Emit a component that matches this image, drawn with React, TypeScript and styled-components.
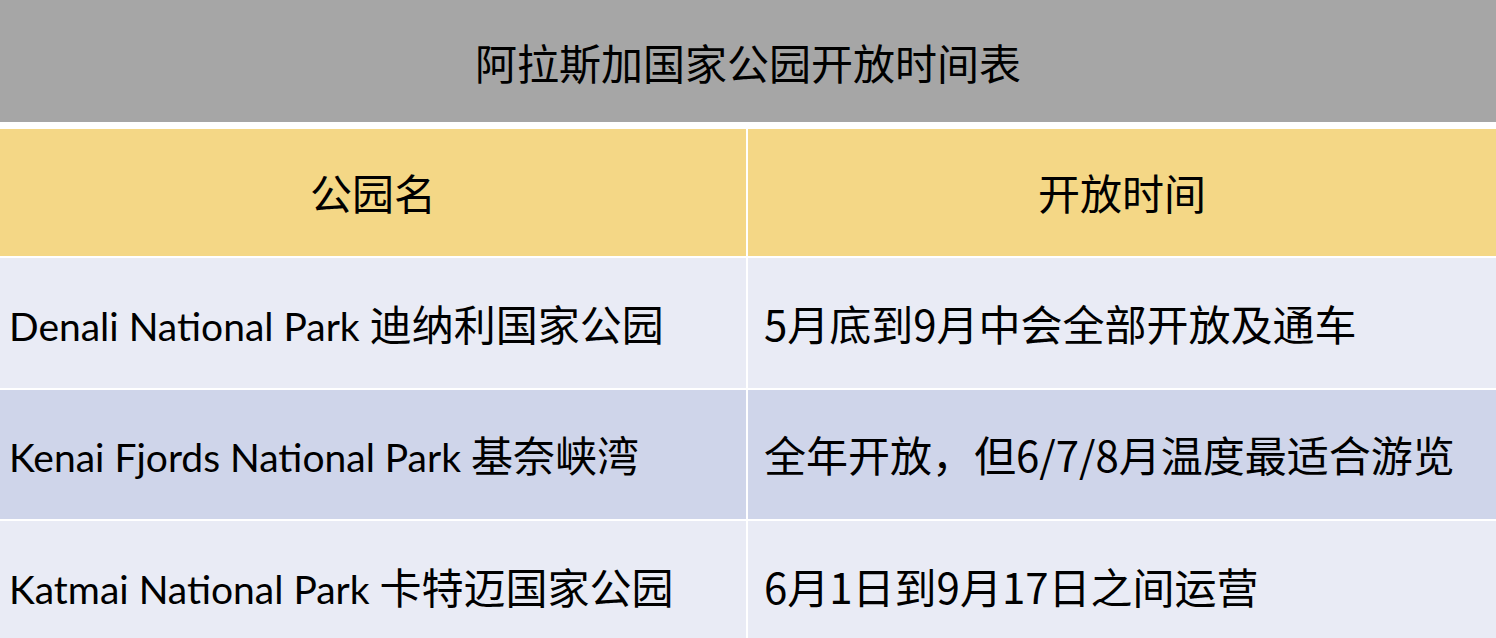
import React from "react";
import styled, { createGlobalStyle } from "styled-components";

const Global = createGlobalStyle`
  html, body { margin: 0; padding: 0; background: #ffffff; }
  body { font-family: Lato, "Noto Sans CJK SC", sans-serif; color: #000; }
`;

const Page = styled.div`
  display: flex;
  flex-direction: column;
  width: 1496px;
  height: 638px;
  overflow: hidden;
  background: #ffffff;
`;

const TitleBar = styled.div`
  height: 122px;
  flex: none;
  background: #a6a6a6;
  display: flex;
  align-items: center;
  justify-content: center;
  font-family: "Noto Sans CJK SC", sans-serif;
  font-size: 42px;
  margin-bottom: 7px;
`;

const Table = styled.div`
  display: grid;
  grid-template-columns: 746px 1fr;
  column-gap: 2px;
  row-gap: 2px;
`;

const Cell = styled.div<{ $bg: string; $h: number; $center?: boolean; $pad: number }>`
  background: ${(p) => p.$bg};
  height: ${(p) => p.$h}px;
  display: flex;
  align-items: center;
  justify-content: ${(p) => (p.$center ? "center" : "flex-start")};
  padding-left: ${(p) => p.$pad}px;
  padding-bottom: 2px;
  box-sizing: border-box;
  white-space: nowrap;
`;

const Line = styled.span`
  font-family: Lato, "Noto Sans CJK SC", sans-serif;
  font-size: 39px;
  white-space: pre;
`;

const Zh = styled.span<{ $size?: number }>`
  font-family: "Noto Sans CJK SC", sans-serif;
  font-size: ${(p) => p.$size ?? 42}px;
`;

const rows = [
  { en: "Denali National Park ", zh: "迪纳利国家公园", time: "5月底到9月中会全部开放及通车", bg: "#e9ebf5", h: 130 },
  { en: "Kenai Fjords National Park ", zh: "基奈峡湾", time: "全年开放，但6/7/8月温度最适合游览", bg: "#cfd5ea", h: 129 },
  { en: "Katmai National Park ", zh: "卡特迈国家公园", time: "6月1日到9月17日之间运营", bg: "#e9ebf5", h: 130 },
];

export default function App() {
  return (
    <Page>
      <Global />
      <TitleBar>阿拉斯加国家公园开放时间表</TitleBar>
      <Table>
        <Cell $bg="#f4d786" $h={127} $center $pad={0}>
          <Zh $size={42}>公园名</Zh>
        </Cell>
        <Cell $bg="#f4d786" $h={127} $center $pad={0}>
          <Zh $size={42}>开放时间</Zh>
        </Cell>
        {rows.map((r) => (
          <React.Fragment key={r.en}>
            <Cell $bg={r.bg} $h={r.h} $pad={9}>
              <Line>
                {r.en}
                <Zh>{r.zh}</Zh>
              </Line>
            </Cell>
            <Cell $bg={r.bg} $h={r.h} $pad={16}>
              <Zh>{r.time}</Zh>
            </Cell>
          </React.Fragment>
        ))}
      </Table>
    </Page>
  );
}
